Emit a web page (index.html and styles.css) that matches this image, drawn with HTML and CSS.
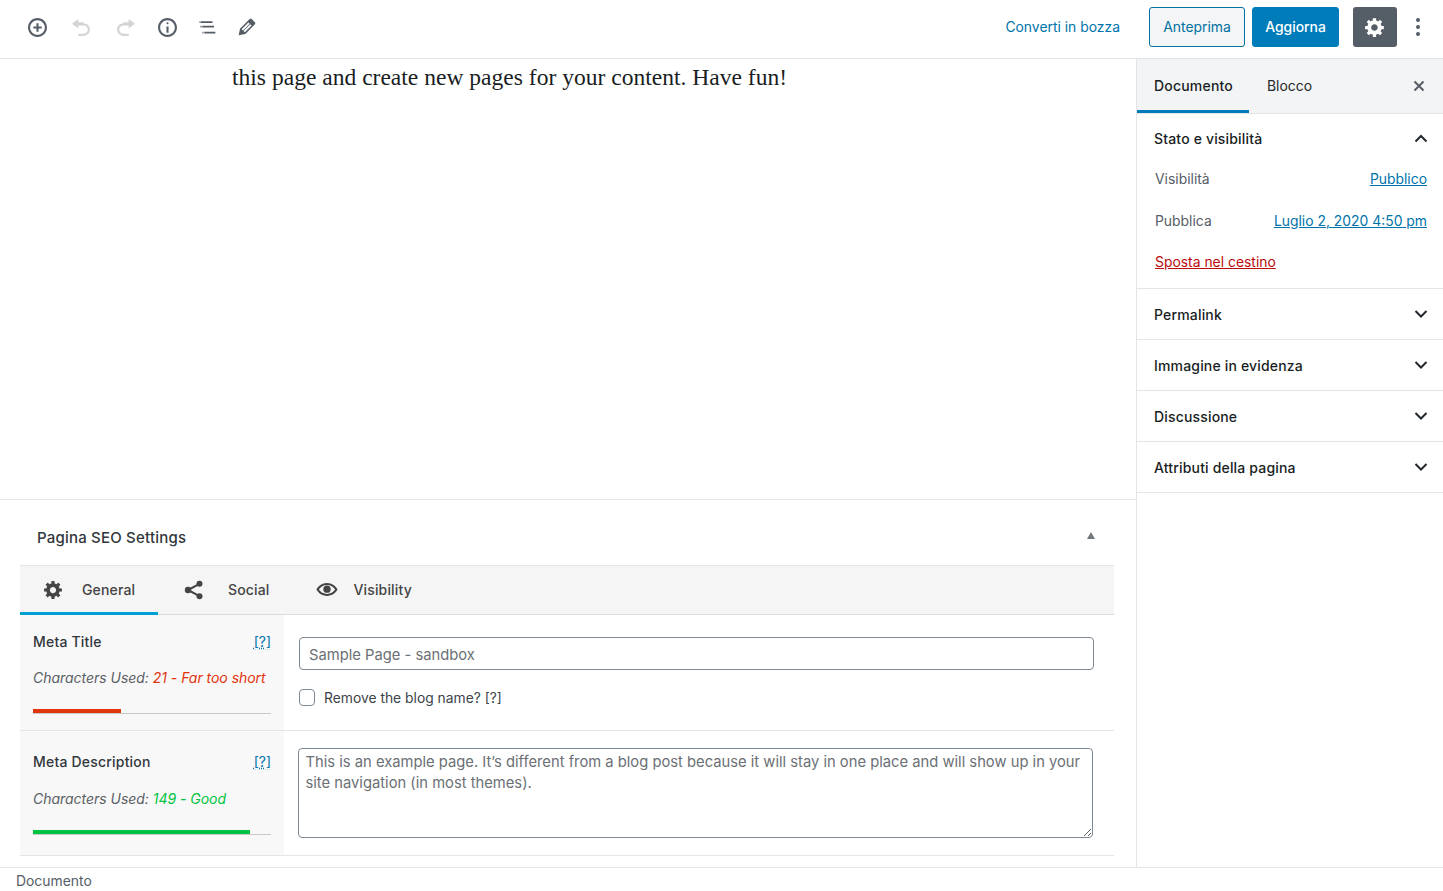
FILE: index.html
```html
<!DOCTYPE html>
<html lang="it">
<head>
<meta charset="utf-8">
<title>Sample Page</title>
<link rel="stylesheet" href="styles.css">
</head>
<body>
<div class="app">
  <header class="topbar">
    <div class="tools">
      <svg class="ico" viewBox="0 0 20 20"><path d="M10 1c-5 0-9 4-9 9s4 9 9 9 9-4 9-9-4-9-9-9zm0 16c-3.900 0-7-3.100-7-7s3.100-7 7-7 7 3.100 7 7-3.100 7-7 7zm1-11H9v3H6v2h3v3h2v-3h3V9h-3V6z"/></svg>
      <svg class="ico dim t-undo" viewBox="0 0 20 20"><path d="M12 5H7V2L1 6.500 7 11V8h5c2.200 0 4 1.800 4 4s-1.800 4-4 4H7v2h5c3.300 0 6-2.700 6-6s-2.700-6-6-6z"/></svg>
      <svg class="ico dim t-redo" viewBox="0 0 20 20"><path d="M8 5h5V2l6 4.500-6 4.500V8H8c-2.200 0-4 1.800-4 4s1.800 4 4 4h5v2H8c-3.300 0-6-2.700-6-6s2.700-6 6-6z"/></svg>
      <svg class="ico t-info" viewBox="0 0 20 20"><path d="M9 15h2V9H9v6zm1-10c-.5 0-1 .5-1 1s.5 1 1 1 1-.5 1-1-.5-1-1-1zm0-4c-5 0-9 4-9 9s4 9 9 9 9-4 9-9-4-9-9-9zm0 16c-3.900 0-7-3.100-7-7s3.100-7 7-7 7 3.100 7 7-3.100 7-7 7z"/></svg>
      <svg class="ico t-list" viewBox="0 0 20 20"><path d="M2.400 4h1v1.600h-1zM3.800 4h11v1.600h-11zM3.300 8.400h1V10h-1zM5 8.400h11.200V10H5zM5.200 14h1v1.600h-1zM7 14h10.500v1.600H7z"/></svg>
      <svg class="ico-pen t-pen" viewBox="0 0 20 20"><path d="M13.890 3.390l2.710 2.720c.46.46.42 1.240.03 1.640l-8.010 8.020-5.560 1.160 1.160-5.580s7.600-7.630 7.990-8.030c.39-.39 1.220-.39 1.680.07zm-2.730 2.790l-5.590 5.610 1.110 1.110 5.540-5.650zm-2.970 8.230l5.580-5.600-1.070-1.080-5.590 5.600z"/></svg>
    </div>
    <div class="actions">
      <a class="draft">Converti in bozza</a>
      <button class="btn btn-outline">Anteprima</button>
      <button class="btn btn-primary">Aggiorna</button>
      <button class="btn-gear">
        <svg class="gear-ico" viewBox="0 0 20 20"><path d="M18 12h-2.180c-.17.700-.44 1.350-.81 1.930l1.540 1.540-2.100 2.100-1.540-1.540c-.58.360-1.230.630-1.910.790V19H8v-2.180c-.68-.16-1.330-.43-1.910-.79l-1.540 1.540-2.120-2.120 1.540-1.540c-.36-.58-.63-1.230-.79-1.910H1V9.030h2.170c.16-.7.440-1.350.8-1.940L2.430 5.550l2.100-2.100 1.540 1.540c.58-.37 1.240-.64 1.930-.81V2h3v2.180c.68.160 1.330.430 1.910.790l1.540-1.540 2.120 2.120-1.540 1.540c.36.590.640 1.240.8 1.940H18V12zm-8.500 1.500c1.660 0 3-1.340 3-3s-1.340-3-3-3-3 1.340-3 3 1.340 3 3 3z"/></svg>
      </button>
      <svg class="kebab" viewBox="0 0 6 20"><circle cx="3" cy="3" r="2"/><circle cx="3" cy="10" r="2"/><circle cx="3" cy="17" r="2"/></svg>
    </div>
  </header>

  <div class="body">
    <main class="editor">
      <div class="canvas">
        <p class="content">this page and create new pages for your content. Have fun!</p>
      </div>
      <div class="metaarea">
        <section class="metabox">
          <div class="metahead">
            <h2>Pagina SEO Settings</h2>
            <span class="tri"></span>
          </div>
          <nav class="metatabs">
            <a class="mtab mtab-general active">
              <svg class="mico" viewBox="0 0 20 20"><path d="M18 12h-2.180c-.17.700-.44 1.350-.81 1.930l1.540 1.540-2.100 2.100-1.540-1.540c-.58.360-1.230.630-1.910.790V19H8v-2.180c-.68-.16-1.330-.43-1.910-.79l-1.540 1.540-2.120-2.120 1.540-1.540c-.36-.58-.63-1.230-.79-1.910H1V9.030h2.170c.16-.7.440-1.350.8-1.940L2.430 5.550l2.100-2.100 1.540 1.540c.58-.37 1.240-.64 1.930-.81V2h3v2.180c.68.160 1.330.430 1.910.790l1.540-1.540 2.120 2.120-1.540 1.540c.36.590.640 1.240.8 1.940H18V12zm-8.500 1.500c1.660 0 3-1.340 3-3s-1.340-3-3-3-3 1.340-3 3 1.340 3 3 3z"/></svg>
              General
            </a>
            <a class="mtab mtab-social">
              <svg class="mico-share" viewBox="0 0 20 20"><circle cx="15.500" cy="3.800" r="3"/><circle cx="15.500" cy="16.200" r="3"/><circle cx="4" cy="10" r="3.200"/><path d="M4 10l11.500-6.200M4 10l11.500 6.200" stroke="#444" stroke-width="2" fill="none"/></svg>
              Social
            </a>
            <a class="mtab mtab-vis">
              <svg class="mico-eye" viewBox="0 0 24 16"><path fill-rule="evenodd" d="M12 1C6.500 1 2.300 4.500.5 8c1.800 3.500 6 7 11.500 7s9.700-3.500 11.500-7C21.700 4.500 17.500 1 12 1zm0 2.200c3.800 0 7 2 8.900 4.800-1.900 2.800-5.100 4.800-8.900 4.800S5 10.800 3.100 8C5 5.200 8.200 3.200 12 3.200z"/><circle cx="12" cy="7.600" r="4"/></svg>
              Visibility
            </a>
          </nav>
          <div class="row row-title">
            <div class="rowhead">
              <div class="labelline"><strong>Meta Title</strong><a class="help">[?]</a></div>
              <p class="counter">Characters Used: <span class="bad">21 - Far too short</span></p>
              <div class="meter"><div class="fill fill-bad" style="width:37%"></div></div>
            </div>
            <div class="rowbody">
              <input class="field" type="text" value="Sample Page - sandbox">
              <label class="check"><input type="checkbox"><span>Remove the blog name? [?]</span></label>
            </div>
          </div>
          <div class="row row-desc">
            <div class="rowhead">
              <div class="labelline"><strong>Meta Description</strong><a class="help">[?]</a></div>
              <p class="counter">Characters Used: <span class="good">149 - Good</span></p>
              <div class="meter"><div class="fill fill-good" style="width:91%"></div></div>
            </div>
            <div class="rowbody">
              <textarea class="area">This is an example page. It’s different from a blog post because it will stay in one place and will show up in your site navigation (in most themes).</textarea>
            </div>
          </div>
        </section>
      </div>
    </main>

    <aside class="sidebar">
      <div class="sidetabs">
        <a class="stab active">Documento</a>
        <a class="stab">Blocco</a>
        <svg class="close" viewBox="0 0 12 12"><path d="M1.500 1.500l9 9M10.500 1.500l-9 9"/></svg>
      </div>
      <section class="panel panel-open">
        <div class="panelhead"><span>Stato e visibilità</span><svg class="chev" viewBox="0 0 14 10"><path d="M1.500 7.500L7 2l5.500 5.500"/></svg></div>
        <div class="prow prow-vis"><span>Visibilità</span><a>Pubblico</a></div>
        <div class="prow prow-pub"><span>Pubblica</span><a>Luglio 2, 2020 4:50 pm</a></div>
        <a class="trash">Sposta nel cestino</a>
      </section>
      <section class="panel"><div class="panelhead"><span>Permalink</span><svg class="chev" viewBox="0 0 14 10"><path d="M1.500 2L7 7.500 12.500 2"/></svg></div></section>
      <section class="panel"><div class="panelhead"><span>Immagine in evidenza</span><svg class="chev" viewBox="0 0 14 10"><path d="M1.500 2L7 7.500 12.500 2"/></svg></div></section>
      <section class="panel"><div class="panelhead"><span>Discussione</span><svg class="chev" viewBox="0 0 14 10"><path d="M1.500 2L7 7.500 12.500 2"/></svg></div></section>
      <section class="panel"><div class="panelhead"><span>Attributi della pagina</span><svg class="chev" viewBox="0 0 14 10"><path d="M1.500 2L7 7.500 12.500 2"/></svg></div></section>
    </aside>
  </div>

  <footer class="status">Documento</footer>
</div>
</body>
</html>
```

FILE: styles.css
```css
* { box-sizing: border-box; }
html, body { margin: 0; height: 100%; overflow: hidden; }
body {
  font-family: Inter, "Noto Sans", "Liberation Sans", sans-serif;
  font-size: 13.900px;
  color: #23282d;
  background: #fff;
}
.app { display: flex; flex-direction: column; width: 1443px; height: 891px; }

.topbar {
  height: 59px;
  flex: none;
  display: flex;
  align-items: center;
  justify-content: space-between;
  border-bottom: 1px solid #e2e4e7;
  padding: 0 22px 4px 27px;
}
.tools { display: flex; align-items: center; }
.ico { width: 21px; height: 21px; fill: #555d66; display: block; }
.ico.dim { fill: #d2d4d6; }
.ico-pen { width: 24px; height: 24px; fill: #555d66; display: block; }
.t-undo { margin-left: 22.500px; }
.t-redo { margin-left: 23px; }
.t-info { margin-left: 21px; }
.t-list { margin-left: 19px; }
.t-pen { margin-left: 17.500px; }
.actions { display: flex; align-items: center; }
.draft { color: #0073aa; margin-right: 29px; }
.btn {
  height: 40px;
  border-radius: 3px;
  font: inherit;
  padding: 0;
}
.btn-outline { width: 96px; background: #f3f5f6; border: 1px solid #0071a1; color: #0071a1; margin-right: 7px; }
.btn-primary { width: 87px; background: #007cba; border: 1px solid #007cba; color: #fff; font-weight: 500; margin-right: 14px; }
.btn-gear {
  width: 44px;
  height: 40px;
  background: #555d66;
  border: 0;
  border-radius: 3px;
  padding: 0;
  display: flex;
  align-items: center;
  justify-content: center;
  margin-right: 18px;
}
.gear-ico { width: 22px; height: 22px; fill: #fff; }
.kebab { width: 6px; height: 20px; fill: #555d66; }

.body { flex: 1; display: flex; min-height: 0; }
.editor { width: 1136px; flex: none; display: flex; flex-direction: column; }
.canvas { height: 441px; flex: none; border-bottom: 1px solid #e2e4e7; padding-left: 232px; }
.content {
  margin: 0;
  padding-top: 3px;
  font-family: "Liberation Serif", "DejaVu Serif", serif;
  font-size: 23.550px;
  line-height: 30px;
  color: #191e23;
  white-space: nowrap;
}
.metaarea { padding: 0 22px 0 20px; }
.metabox { background: #fff; }
.metahead {
  height: 65px;
  display: flex;
  align-items: center;
  justify-content: space-between;
  padding: 9px 19px 0 17px;
}
.metahead h2 { margin: 0; font-size: 15px; font-weight: 500; color: #32373c; letter-spacing: .2px; }
.tri { width: 0; height: 0; border-left: 4.500px solid transparent; border-right: 4.500px solid transparent; border-bottom: 7px solid #72777c; margin-bottom: 3px; }
.metatabs {
  height: 50px;
  display: flex;
  background: #f5f5f5;
  border-top: 1px solid #e5e5e5;
  border-bottom: 1px solid #dcdcde;
}
.mtab {
  display: flex;
  align-items: center;
  height: 49px;
  font-size: 14px;
  font-weight: 500;
  letter-spacing: .15px;
  color: #444;
  padding-bottom: 2px;
}
.mtab-general { width: 138px; padding-left: 23px; border-bottom: 3px solid #00a0d2; gap: 18px; padding-bottom: 0; }
.mtab-social { padding-left: 26px; gap: 24px; }
.mtab-vis { padding-left: 46px; gap: 16px; }
.mico { width: 21px; height: 21px; fill: #444; display: block; }
.mico-share { width: 20px; height: 20px; fill: #444; display: block; }
.mico-eye { width: 22px; height: 15px; fill: #444; display: block; }

.row { display: flex; border-bottom: 1px solid #e5e5e5; }
.row-title { height: 116px; }
.row-desc { height: 125px; }
.rowhead { width: 264px; flex: none; background: #f8f8f8; padding: 17px 13px 0; }
.labelline { display: flex; justify-content: space-between; align-items: center; height: 18px; }
.labelline strong { font-size: 14px; font-weight: 500; color: #32373c; letter-spacing: .2px; }
.help { color: #0073aa; font-size: 14px; text-decoration: underline dotted; }
.counter { margin: 19px 0 0; font-size: 14px; line-height: 18px; font-style: italic; color: #5a5f64; white-space: nowrap; letter-spacing: -.03px; }
.bad { color: #e2340d; }
.good { color: #00c441; }
.meter { height: 5px; margin-top: 22px; border-bottom: 1px solid #c8c8c8; }
.fill { height: 4px; }
.fill-bad { background: #e2340d; }
.fill-good { background: #00c441; }
.row-desc .rowhead { padding-top: 21px; }
.row-desc .counter { margin-top: 20px; }
.row-desc .meter { margin-top: 22px; }

.rowbody { flex: 1; padding: 22px 20px 0 15px; }
.field {
  display: block;
  width: 795px;
  height: 33px;
  border: 1px solid #7e8993;
  border-radius: 4px;
  padding: 2px 9px 0;
  font: inherit;
  font-size: 14.750px;
  color: #6b7075;
  background: #fff;
}
.check { display: flex; align-items: center; margin-top: 19px; color: #3c434a; font-size: 13.850px; }
.check input {
  appearance: none;
  width: 16px;
  height: 17px;
  margin: 0 9px 0 0;
  border: 1px solid #7e8993;
  border-radius: 4px;
  background: #fff;
}
.row-desc .rowbody { padding: 17px 20px 0 14px; }
.area {
  display: block;
  width: 795px;
  height: 90px;
  border: 1px solid #7e8993;
  border-radius: 4px;
  padding: 3px 6.500px;
  font: inherit;
  font-size: 14.750px;
  line-height: 21px;
  color: #6b7075;
  background: #fff;
  outline: 0;
}

.sidebar { width: 307px; flex: none; border-left: 1px solid #e2e4e7; }
.sidetabs {
  height: 55px;
  background: #f3f4f5;
  border-bottom: 1px solid #e2e4e7;
  display: flex;
  align-items: center;
  position: relative;
}
.stab {
  height: 54px;
  display: flex;
  align-items: center;
  color: #23282d;
  padding-left: 18px;
  padding-right: 0;
  border-bottom: 3px solid transparent;
  padding-top: 3px;
}
.stab.active { width: 112px; padding-left: 17px; padding-top: 1px; font-size: 14px; font-weight: 500; letter-spacing: .2px; border-bottom-color: #007cba; color: #191e23; }
.close { width: 12px; height: 12px; margin-left: auto; margin-right: 18px; fill: none; stroke: #555d66; stroke-width: 2; }
.panel { border-bottom: 1px solid #e2e4e7; height: 51px; }
.panel-open { height: 175px; }
.panelhead {
  height: 50px;
  display: flex;
  align-items: center;
  justify-content: space-between;
  padding: 0 15px 0 17px;
  font-size: 14px;
  font-weight: 500;
  letter-spacing: .17px;
  color: #191e23;
}
.panel-open .panelhead span { padding-bottom: 2px; }
.chev { width: 14px; height: 10px; fill: none; stroke: #23282d; stroke-width: 2; }
.prow { display: flex; justify-content: space-between; align-items: center; padding: 0 16px 0 18px; height: 20px; color: #555d66; }
.prow-vis { margin-top: 5px; }
.prow-pub { margin-top: 22px; }
.prow a { color: #0073aa; text-decoration: underline; }
.trash { display: block; margin: 21px 0 0 18px; color: #bc0b0b; text-decoration: underline; line-height: 20px; }

.status {
  height: 24px;
  flex: none;
  border-top: 1px solid #e2e4e7;
  padding: 4px 0 0 16px;
  line-height: 18px;
  color: #555d66;
}
```
